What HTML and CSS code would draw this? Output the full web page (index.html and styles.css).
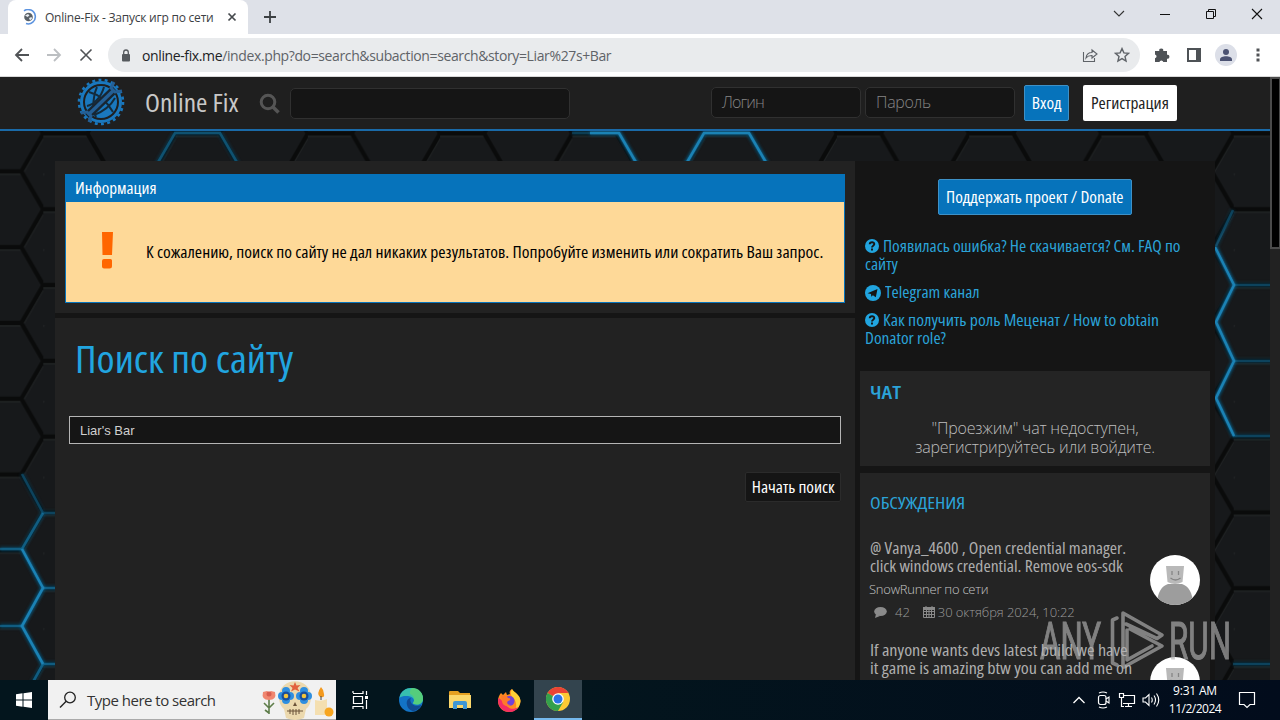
FILE: index.html
```html
<!DOCTYPE html>
<html lang="ru">
<head>
    <meta charset="UTF-8">
    <meta name="viewport" content="width=device-width, initial-scale=1.0">
    <title>Online-Fix - Запуск игр по сети</title>
    <link rel="stylesheet" href="styles.css">
</head>
<body>

    <!-- Browser tabs -->
    <div class="tabbar">
        <div class="tab">
            <svg class="favicon" width="16" height="16" viewBox="0 0 16 16">
                <path d="M3 1.8A7.2 7.2 0 1 1 5 14.6" fill="none" stroke="#5b93e0" stroke-width="1.6"/>
                <circle cx="7.5" cy="8" r="4.3" fill="#596066"/>
                <path d="M4 6.5l3-1.5 1.5 1.5-2 1.5zM8 9l2.5-1 .5 1.5-2 2z" fill="#e8edf2"/>
            </svg>
            <span class="tab-title">Online-Fix - Запуск игр по сети</span>
            <svg width="10" height="10" viewBox="0 0 10 10"><path d="M1.5 1.5l7 7M8.5 1.5l-7 7" stroke="#45494d" stroke-width="1.7"/></svg>
        </div>
        <svg class="new-tab" width="12" height="12" viewBox="0 0 12 12"><path d="M6 0v12M0 6h12" stroke="#3c4043" stroke-width="1.8"/></svg>
        <div class="window-buttons">
            <svg width="12" height="12" viewBox="0 0 12 12"><path d="M1 3l5 5 5-5" fill="none" stroke="#333" stroke-width="1.1"/></svg>
            <svg width="12" height="12" viewBox="0 0 12 12"><path d="M1 6.5h10" stroke="#111"/></svg>
            <svg width="12" height="12" viewBox="0 0 12 12"><path d="M1.5 3.5h7v7h-7zM3.5 3.5v-2h7v7h-2" fill="none" stroke="#111"/></svg>
            <svg width="12" height="12" viewBox="0 0 12 12"><path d="M1 1l10 10M11 1L1 11" stroke="#111" stroke-width="1.1"/></svg>
        </div>
    </div>

    <!-- Address bar -->
    <div class="toolbar">
        <div class="nav-buttons">
            <svg width="16" height="16" viewBox="0 0 16 16"><path d="M15 8H2M8 2L2 8l6 6" fill="none" stroke="#505356" stroke-width="1.8"/></svg>
            <svg width="16" height="16" viewBox="0 0 16 16"><path d="M1 8h13M8 2l6 6-6 6" fill="none" stroke="#bcbfc2" stroke-width="1.8"/></svg>
            <svg width="16" height="16" viewBox="0 0 16 16"><path d="M2.5 2.5l11 11M13.5 2.5l-11 11" stroke="#505356" stroke-width="1.6"/></svg>
        </div>
        <div class="address">
            <svg width="10" height="13" viewBox="0 0 10 13"><rect x="1" y="5" width="8" height="7.5" rx="1" fill="#55595d"/><path d="M2.7 5V3.3a2.3 2.3 0 0 1 4.6 0V5" fill="none" stroke="#55595d" stroke-width="1.3"/></svg>
            <div class="url"><b>online-fix.me</b>/index.php?do=search&amp;subaction=search&amp;story=Liar%27s+Bar</div>
            <svg width="16" height="16" viewBox="0 0 16 16"><path d="M1.5 5v9.5h11V11M4 11c.5-4 2.500-5.500 6-5.500V3l5 4-5 4V8.500C7.500 8.400 5.500 9 4 11z" fill="none" stroke="#5f6368" stroke-width="1.100"/></svg>
            <svg width="16" height="16" viewBox="0 0 16 16"><path d="M8 1.600l1.900 4.300 4.600.4-3.500 3.100 1.050 4.600L8 11.600 3.950 14 5 9.400 1.500 6.300l4.600-.4z" fill="none" stroke="#5f6368" stroke-width="1.400"/></svg>
        </div>
        <div class="toolbar-icons">
            <svg width="16" height="16" viewBox="0 0 16 16"><path d="M1 4h4.300a2 2 0 1 1 3.900 0H13v3.800a2 2 0 1 1 0 3.900V15H9.300a2 2 0 0 0-3.900 0H1v-3.700a2 2 0 0 0 0-3.900z" fill="#4e5256"/></svg>
            <svg width="16" height="16" viewBox="0 0 16 16"><path d="M1 1h14v14H1zM3 3v10h7V3z" fill="#4e5256" fill-rule="evenodd"/></svg>
            <svg width="22" height="22" viewBox="0 0 22 22"><circle cx="11" cy="11" r="11" fill="#dcdfe8"/><circle cx="11" cy="8" r="3" fill="#4b5272"/><path d="M5 17v-1.500c0-2 3-3.200 6-3.200s6 1.200 6 3.200V17z" fill="#4b5272"/></svg>
            <svg class="kebab" width="4" height="16" viewBox="0 0 4 16"><path d="M.5 1.500h3v3h-3zM.5 6.500h3v3h-3zM.5 11.500h3v3h-3z" fill="#505356"/></svg>
        </div>
    </div>

    <!-- Page -->
    <div class="page">
        <svg class="honeycomb" width="1270" height="603" viewBox="0 77 1270 603">
            <defs>
                <pattern id="hex" x="43.300" y="133.500" width="132.270" height="75.800" patternUnits="userSpaceOnUse">
                    <rect width="133" height="76" fill="#17191b"/>
                    <g id="cell" fill="none">
                        <path d="M-2 2.500H44.100M44.100 78.300H-2M67 38.900L44.100 78.300M66 40.400H110.300M111.500 39.900L134.300 0.500M-22 78.300L0.500 39.900" stroke="#232627" stroke-width="2"/>
                        <path d="M-2 0H44.100L66 37.900 44.100 75.800H-2M66 37.900H110.300L132.300 75.800M110.300 37.900L132.300 0" stroke="#0a0b0b" stroke-width="4.400"/>
                    </g>
                </pattern>
                <filter id="glow" filterUnits="userSpaceOnUse" x="-20" y="77" width="1310" height="620"><feGaussianBlur stdDeviation="1.500"/></filter>
                <g id="lit">
                    <path d="M153 171l22-38h45l22 38" opacity=".45"/>
                    <path d="M572 133h20" opacity=".3"/>
                    <path d="M590 133h29l22 38M682 171l22-38h45l22 38"/>
                    <path d="M22 474l21 39h14" opacity=".35"/>
                    <path d="M43 513l-21 36H0M43 588h14M22 626H0M43 664h14M43 664l-10 18" opacity=".55"/>
                    <path d="M22 549l21 39-21 38 21 38"/>
                    <path d="M1233 210l-17 36M1233 285h40M1233 361h40M1233 436h40M1233 664h40" opacity=".35"/>
                    <path d="M1215 247l19 38-18 37 18 39-18 37 18 38"/>
                </g>
            </defs>
            <rect y="77" width="1270" height="603" fill="url(#hex)"/>
            <use href="#lit" fill="none" stroke="#0a5c84" stroke-width="4.500" filter="url(#glow)"/>
            <use href="#lit" fill="none" stroke="#1b82b4" stroke-width="2.600"/>
        </svg>

        <header class="header">
            <svg class="logo" width="48" height="48" viewBox="0 0 48 48">
                <circle cx="24" cy="24" r="22" fill="none" stroke="#1a78be" stroke-width="2.600" stroke-dasharray="2.900 3.380"/>
                <circle cx="24" cy="24" r="19.500" fill="none" stroke="#1a78be" stroke-width="3"/>
                <circle cx="24" cy="24" r="16" fill="#1a78be"/>
                <path d="M12 14c8 2 17 8 24 20M10 28c6-1 14-8 17-19M17 37c8-3 16-8 21-17M20 9c-4 8-5 20-1 30" fill="none" stroke="#142b3c" stroke-width="2"/>
                <path d="M10 38L38 11" stroke="#182632" stroke-width="8"/>
                <path d="M11 37L37 12" stroke="#245f95" stroke-width="3.500"/>
                <path d="M37 4l-3 6 4 4 7-1M4 35l6-1 4 4-2 6" fill="none" stroke="#245f95" stroke-width="3"/>
            </svg>
            <div class="brand"><span class="cond">Online Fix</span></div>
            <svg class="search-icon" width="22" height="22" viewBox="0 0 22 22"><circle cx="9" cy="9" r="6.800" fill="none" stroke="#555" stroke-width="3"/><path d="M13.500 13.500l6 6" stroke="#555" stroke-width="3.600"/></svg>
            <div class="field field-search"></div>
            <div class="field field-login">Логин</div>
            <div class="field field-pass">Пароль</div>
            <div class="btn btn-blue btn-enter"><span class="cond">Вход</span></div>
            <div class="btn btn-white btn-reg"><span class="cond">Регистрация</span></div>
        </header>

        <div class="wrapper">
            <main class="content">
                <section class="block block-info">
                    <div class="alert">
                        <div class="alert-title"><span class="cond">Информация</span></div>
                        <div class="alert-body">
                            <svg width="12" height="37" viewBox="0 0 12 37"><path d="M1 0h11l-1 23H1.500zM3 27h6.500q1.500 0 1.500 1.500V34q0 2.500-2.500 2.500H3q-2 0-2-2V29q0-2 2-2z" fill="#f60"/></svg>
                            <span class="alert-text cond">К сожалению, поиск по сайту не дал никаких результатов. Попробуйте изменить или сократить Ваш запрос.</span>
                        </div>
                    </div>
                </section>
                <section class="block block-search">
                    <h1><span class="cond">Поиск по сайту</span></h1>
                    <div class="query">Liar's Bar</div>
                    <div class="btn btn-dark"><span class="cond">Начать поиск</span></div>
                </section>
            </main>

            <aside class="sidebar">
                <div class="btn btn-blue btn-donate"><span class="cond">Поддержать проект / Donate</span></div>
                <div class="links">
                    <p><svg class="ic" width="14" height="14" viewBox="0 0 14 14"><circle cx="7" cy="7" r="7" fill="#21a5e0"/><path d="M4.700 5.300C4.800 2.600 9.500 2.700 9.300 5.200 9.200 6.700 7 6.700 7 8.400M7 9.600v1.900" fill="none" stroke="#151515" stroke-width="1.900"/></svg> <span class="cond">Появилась ошибка? Не скачивается? См. FAQ по</span><br><span class="cond">сайту</span></p>
                    <p class="link-tg"><svg class="ic" width="16" height="16" viewBox="0 0 16 16"><circle cx="8" cy="8" r="8" fill="#21a5e0"/><path d="M2.500 8.200L12.500 4l-1.700 8.300-2.900-2.100-1.600 1.500-.3-2.600z" fill="#151515"/></svg> <span class="cond">Telegram канал</span></p>
                    <p><svg class="ic" width="14" height="14" viewBox="0 0 14 14"><circle cx="7" cy="7" r="7" fill="#21a5e0"/><path d="M4.700 5.300C4.800 2.600 9.500 2.700 9.300 5.200 9.200 6.700 7 6.700 7 8.400M7 9.600v1.900" fill="none" stroke="#151515" stroke-width="1.900"/></svg> <span class="cond link-role">Как получить роль Меценат / How to obtain</span><br><span class="cond">Donator role?</span></p>
                </div>
                <section class="side-box chat">
                    <h3><span class="cond">ЧАТ</span></h3>
                    <p>"Проезжим" чат недоступен,<br>зарегистрируйтесь или войдите.</p>
                </section>
                <section class="side-box talks">
                    <h4><span class="cond">ОБСУЖДЕНИЯ</span></h4>
                    <article class="talk">
                        <div class="talk-main">
                            <p class="talk-text cond">@ Vanya_4600 , Open credential manager.<br>click windows credential. Remove eos-sdk</p>
                            <div class="talk-game">SnowRunner по сети</div>
                            <div class="talk-meta">
                                <svg width="13" height="12" viewBox="0 0 13 12"><ellipse cx="6.500" cy="5.500" rx="6.300" ry="4.500" fill="#8a8a8a"/><path d="M2 8l-1 4 5-2z" fill="#8a8a8a"/></svg>
                                <span class="count">42</span>
                                <svg width="12" height="13" viewBox="0 0 12 13"><path d="M.5 3.500h11v9H.5zM.5 6.500h11M.5 9.500h11M3.500 4v8M6 4v8M8.500 4v8M3 1v3M9 1v3" fill="none" stroke="#8a8a8a"/><path d="M0 2h12v3H0z" fill="#8a8a8a"/></svg>
                                <span class="date">30 октября 2024, 10:22</span>
                            </div>
                        </div>
                        <svg class="avatar" width="50" height="50" viewBox="0 0 50 50">
                            <defs>
                                <clipPath id="round"><circle cx="25" cy="25" r="25"/></clipPath>
                                <g id="person">
                                    <rect width="50" height="50" fill="#fff"/>
                                    <path d="M7 50c0-13 5-19 11-21h14c6 2 11 8 11 21z" fill="#9d9d9d"/>
                                    <path d="M16 11h18l-1.500 16q-7.500 4-15 0z" fill="#b9b9b9"/>
                                    <path d="M22 16v4M28.500 16v4M20.500 23q5 4 10 0" fill="none" stroke="#858585" stroke-width="1.300"/>
                                </g>
                            </defs>
                            <use href="#person" clip-path="url(#round)"/>
                        </svg>
                    </article>
                    <article class="talk">
                        <div class="talk-main">
                            <p class="talk-text talk-wide cond">If anyone wants devs latest build we have<br>it game is amazing btw you can add me on</p>
                        </div>
                        <svg class="avatar" width="50" height="50" viewBox="0 0 50 50"><use href="#person" clip-path="url(#round)"/></svg>
                    </article>
                </section>
            </aside>
        </div>

        <div class="scrollbar"><div class="thumb"></div></div>

        <svg class="watermark" width="192" height="64" viewBox="0 0 192 64">
            <g fill="#b4b4b4" stroke="#b4b4b4" stroke-width="1.200">
                <text x="0" y="50" font-size="51" textLength="61" lengthAdjust="spacingAndGlyphs">ANY</text>
                <text x="129" y="50" font-size="51" textLength="62" lengthAdjust="spacingAndGlyphs">RUN</text>
            </g>
            <path d="M77 9l-4.500 2v43l4.500 2M83 56V4l39 22-5 3.500L86 15M87 21v30l25-14M90 20l32 17-38 21" fill="none" stroke="#b4b4b4" stroke-width="3.600" stroke-linejoin="round" stroke-linecap="round"/>
        </svg>
    </div>

    <!-- Taskbar -->
    <div class="taskbar">
        <div class="start"><svg width="16" height="16" viewBox="0 0 16 16"><path d="M0 2.200l6.500-.9v6.200H0zM7.500 1.200L16 0v7.500H7.500zM0 8.500h6.500v6.200L0 13.800zM7.500 8.500H16V16l-8.500-1.200z" fill="#fff"/></svg></div>
        <div class="task-search">
            <svg width="18" height="18" viewBox="0 0 18 18"><circle cx="11" cy="6.500" r="5.300" fill="none" stroke="#222" stroke-width="1.300"/><path d="M7.200 10.300L1 16.500" stroke="#222" stroke-width="1.400"/></svg>
            <span>Type here to search</span>
            <svg width="74" height="40" viewBox="0 0 74 40">
                <path d="M8 16v18M8 28l-5-5M8 28l5-5M8 33l-4-3" stroke="#5e7d4a" stroke-width="1.600" fill="none"/>
                <path d="M2 12l4-1 2 1 2-1 4 1q2 8-6 8T2 12z" fill="#f0866f"/>
                <circle cx="8" cy="14" r="2.500" fill="#d75d4f"/>
                <path d="M18 17C18-4 50-4 50 17q0 8-5 12l-2 9q-9 4-18 0l-2-9q-5-4-5-12z" fill="#ecd9ae"/>
                <g fill="#2f8fe0"><circle cx="25" cy="11" r="4"/><circle cx="21" cy="16" r="4"/><circle cx="29" cy="16" r="4"/><circle cx="25" cy="20" r="4"/><circle cx="43" cy="11" r="4"/><circle cx="47" cy="16" r="4"/><circle cx="39" cy="16" r="4"/><circle cx="43" cy="20" r="4"/></g>
                <g fill="#194f9c"><circle cx="25" cy="16" r="4.500"/><circle cx="43" cy="16" r="4.500"/></g>
                <g fill="#f2c53a"><circle cx="25" cy="16" r="2.300"/><circle cx="43" cy="16" r="2.300"/></g>
                <path d="M34 2l1.500 3.500 4-.5-3 3 2 3.500-4.500-2-4 2 1.500-3.500-3-3 4 .5z" fill="#e2603d"/>
                <path d="M32 26l2-4 2 4z" fill="#6b5238"/>
                <path d="M26 31h16M29 29v5M32 29v6M35 29v6M38 29v5" stroke="#6b5238"/>
                <path d="M54 20q6 2 12-1v16H54z" fill="#f4dfb0"/>
                <path d="M60 7q-5 7-1 10 5 1 4-3 0-4-3-7z" fill="#f39a1f"/>
                <path d="M60 16v4" stroke="#444"/>
                <circle cx="68" cy="32" r="4.500" fill="#f7a51f"/>
            </svg>
        </div>
        <div class="apps">
            <div class="app app-view"><svg width="18" height="18" viewBox="0 0 18 18"><path d="M1 2V0M1 2.500h10V0M1.500 5.500h9v7h-9zM1 18v-2.500h10V18M14.500 0v4M14.500 9v9" fill="none" stroke="#fff" stroke-width="1.200"/><path d="M13 5h3v3h-3z" fill="#fff"/></svg></div>
            <div class="app"><svg width="26" height="26" viewBox="0 0 26 26">
                <circle cx="13" cy="13" r="12" fill="#1373c6"/>
                <path d="M1.500 11C2.500 4 8 1 13 1c8 0 12 6 12 10.500 0 4-3 6-6.500 6-2.500 0-3.500-1-3.500-1.500 2-2 1-5.500-3-6.500C8 8.500 3.500 9 1.500 11z" fill="#37bfae"/>
                <path d="M14 1c7 0 11 5 11 10.500 0 4-3 6-6 6-3 0-4-1-4-1.500 3-4 0-8-3-9 0-3 0-5 2-6z" fill="#55cd7c"/>
                <path d="M9 18c-1-4 1-7 4-7-1 1-1 4 1 6 3 2.500 7 2 9.500 1-2 4-6 6-9 6-3-1-5-3-5.500-6z" fill="#114a91"/>
            </svg></div>
            <div class="app"><svg width="22" height="20" viewBox="0 0 22 20"><path d="M0 2q0-1 1-1h8l2 2h10v15H0z" fill="#e5a021"/><path d="M0 5h22v13H0z" fill="#fbd76b"/><path d="M4 19v-6q0-2 2-2h10q2 0 2 2v6h-4v-4H8v4z" fill="#3f97d5"/></svg></div>
            <div class="app"><svg width="24" height="24" viewBox="0 0 24 24">
                <path d="M4 5l2 2 3-3 1 3 3-1c-1-2 0-4 2-5 1 3 8 5 8.500 12C23.500 19 18 24 12 24S1 19.500 1 13c0-3 1-6 3-8z" fill="#ff8a1f"/>
                <path d="M15 1c1 3 8 5 8.500 12-1 6-3 8-5 9 2-5 0-11-4-14-1-2-1-5 .5-7z" fill="#ffcf35"/>
                <path d="M1.500 10c-2 8 4 14 11 14 4 0 7-2 9-5-5 3-9 2-12-1-3-2-3-5-8-8z" fill="#f52d63"/>
                <circle cx="12.500" cy="13" r="5" fill="#7141d9"/><path d="M4 8c3-1 6 0 7 2 3 0 3 2 0 3-2 2 0 4 3 4-4 3-9 0-9-4z" fill="#ff7a2a"/>
            </svg></div>
            <div class="app app-active"><svg width="24" height="24" viewBox="0 0 24 24">
                <circle cx="12" cy="12" r="12" fill="#fcc934"/>
                <path d="M12 12L1.600 6A12 12 0 0 1 22.400 6z" fill="#ea4335"/>
                <path d="M12 12L1.600 6A12 12 0 0 0 12 24l5.200-9z" fill="#34a04c"/>
                <path d="M12 6h10.400L17.200 15z" fill="#fcc934"/>
                <circle cx="12" cy="12" r="5.800" fill="#fff"/><circle cx="12" cy="12" r="4.500" fill="#2b73e8"/>
            </svg></div>
        </div>
        <div class="tray">
            <svg width="18" height="18" viewBox="-2 0 18 18"><path d="M1.500 12L7 6.500 12.500 12" fill="none" stroke="#fff" stroke-width="1.300"/></svg>
            <svg width="18" height="18" viewBox="-3 0 18 18"><rect x="1.500" y="4.500" width="7.500" height="9" rx="2" fill="none" stroke="#fff" stroke-width="1.200"/><path d="M9 8l3-2v6L9 10M2 2q4-2 8 0M2 16q4 2 8 0" fill="none" stroke="#fff" stroke-width="1.100"/></svg>
            <svg width="18" height="18" viewBox="0 0 18 18"><path d="M5 4.500h11.500v8H5M10.500 12.500V15M7 15.500h7M1.500 2.500h4v4h-4zM3.500 6.500v9H6" fill="none" stroke="#fff" stroke-width="1.200"/></svg>
            <svg width="18" height="18" viewBox="0 0 18 18"><path d="M1 7h2.500L7 3.500v11L3.500 11H1zM9.500 6.500q1.500 2.500 0 5M12 4.500q3 4.500 0 9M14.500 2.500q4.500 6.500 0 13" fill="none" stroke="#fff" stroke-width="1.100"/></svg>
            <div class="clock"><span>9:31 AM</span><span class="day">11/2/2024</span></div>
            <svg width="18" height="18" viewBox="0 0 18 18"><path d="M1.500 1.500h15v12H12l-3 3-3-3H1.500z" fill="none" stroke="#fff" stroke-width="1.200"/></svg>
        </div>
    </div>

</body>
</html>
```
FILE: styles.css
```css
* {
    margin: 0;
    padding: 0;
    box-sizing: border-box;
}

body {
    width: 1280px;
    height: 720px;
    overflow: hidden;
    display: flex;
    flex-direction: column;
    font-family: "Open Sans", "Noto Sans", sans-serif;
    background: #151515;
}

svg {
    display: block;
    flex-shrink: 0;
}

/* Semi-condensed text: condensed face, slightly widened */
.cond {
    display: inline-block;
    font-family: "Open Sans", "Noto Sans", sans-serif;
    font-stretch: 75%;
    transform: scaleX(1.098);
    transform-origin: left center;
    white-space: nowrap;
}

/* Browser tabs */
.tabbar {
    height: 34px;
    background: #dee1e8;
    display: flex;
    align-items: center;
    padding-left: 8px;
}

.tab {
    width: 240px;
    height: 34px;
    background: #fff;
    border-radius: 8px 8px 0 0;
    display: flex;
    align-items: center;
    padding-left: 13px;
}

.tab-title {
    width: 169px;
    margin: 0 13px 0 8px;
    font-size: 12px;
    letter-spacing: -0.22px;
    white-space: nowrap;
    color: #3c4043;
}

.new-tab {
    margin-left: 16px;
}

.window-buttons {
    margin-left: auto;
    margin-right: 17px;
    display: flex;
    gap: 34px;
    margin-top: -6px;
}

/* Address bar */
.toolbar {
    height: 43px;
    background: #fff;
    border-bottom: 1px solid #d8d8d8;
    display: flex;
    align-items: center;
    padding-left: 14px;
}

.nav-buttons {
    display: flex;
    gap: 16px;
}

.address {
    width: 1032px;
    height: 34px;
    margin-left: 14px;
    padding: 0 10px 0 13px;
    background: #e9ebed;
    border-radius: 17px;
    display: flex;
    align-items: center;
    gap: 16px;
}

.url {
    flex: 1;
    margin-left: -5px;
    font-size: 14px;
    letter-spacing: -0.38px;
    color: #5f6368;
    white-space: nowrap;
}

.url b {
    font-weight: normal;
    color: #202124;
}

.toolbar-icons {
    display: flex;
    align-items: center;
    gap: 16px;
    margin-left: 14px;
}

.toolbar-icons svg:nth-child(3) {
    margin: 0 3px 0 -3px;
}

/* Page */
.page {
    position: relative;
    height: 603px;
    overflow: hidden;
}

.honeycomb {
    position: absolute;
    left: 0;
    top: 0;
}

.header {
    position: relative;
    width: 1270px;
    height: 54px;
    background: #1f1f1f;
    border-bottom: 2px solid #1a6aa8;
    display: flex;
    align-items: center;
    padding-left: 77px;
}

.logo {
    margin-top: -2px;
}

.brand {
    width: 94px;
    margin: -2px 0 0 20px;
    font-size: 25px;
    color: #c8c8c8;
}

.search-icon {
    margin-left: 20px;
    margin-top: 2px;
}

.field {
    height: 31px;
    background: #151515;
    border: 1px solid #303030;
    border-radius: 5px;
    padding-left: 10px;
    font-size: 16px;
    line-height: 29px;
    font-weight: 300;
    color: #858585;
}

.field-search {
    width: 280px;
    margin-left: 9px;
}

.field-login {
    width: 150px;
    margin: -2px 0 0 141px;
    letter-spacing: -0.9px;
}

.field-pass {
    width: 150px;
    margin: -2px 0 0 4px;
    letter-spacing: -0.3px;
}

.btn {
    display: flex;
    align-items: center;
    justify-content: center;
    height: 36px;
    border-radius: 2px;
    font-size: 16px;
}

.btn .cond {
    transform: scaleX(1.085);
    transform-origin: center;
}

.btn-blue {
    background: #0673bb;
    border: 1px solid #3e91c7;
    color: #fff;
}

.btn-white {
    background: #fff;
    color: #222;
}

.btn-enter {
    width: 45px;
    margin-left: 9px;
}

.btn-reg {
    width: 94px;
    margin-left: 14px;
}

.wrapper {
    position: relative;
    width: 1160px;
    height: 520px;
    margin: 30px 0 0 55px;
    display: flex;
    background: #151515;
}

.content {
    width: 800px;
    display: flex;
    flex-direction: column;
    gap: 5px;
}

.block {
    background: #222;
}

.block-info {
    height: 152px;
    padding: 13px 10px;
}

.alert {
    height: 129px;
    border: 1px solid #0673bb;
    background: #fed998;
}

.alert-title {
    height: 27px;
    padding-left: 9px;
    background: #0673bb;
    color: #fff;
    font-size: 16px;
    line-height: 26px;
}

.alert-title .cond {
    transform: scaleX(1.066);
}

.alert-body {
    height: 99px;
    display: flex;
    align-items: center;
    padding-left: 35px;
}

.alert-body svg {
    margin-top: -3px;
}

.alert-text {
    margin-left: 33px;
    font-size: 16px;
    color: #000;
}

.block-search {
    flex: 1;
    padding: 14px;
}

.block-search h1 {
    height: 54px;
    padding-left: 6px;
    font-size: 38px;
    line-height: 52px;
    font-weight: normal;
    color: #21a5e0;
}

h1 .cond {
    transform: scaleX(1.082);
}

.query {
    height: 28px;
    margin-top: 30px;
    padding-left: 10px;
    background: #151515;
    border: 1px solid #b5b5b5;
    font-family: "Liberation Sans", sans-serif;
    font-size: 13px;
    line-height: 27px;
    color: #d0d0d0;
}

.btn-dark {
    width: 96px;
    height: 30px;
    margin: 28px 0 0 auto;
    background: #151515;
    border: 1px solid #2b2b2b;
    color: #fff;
}

/* Sidebar */
.sidebar {
    width: 360px;
    padding: 18px 5px 0;
}

.btn-donate {
    width: 194px;
    margin: 0 auto;
}

.links {
    height: 156px;
    padding: 22px 5px 0;
    font-size: 16px;
    line-height: 18px;
    color: #2ba3d8;
    white-space: nowrap;
}

.links p {
    margin-bottom: 10px;
}

.links .cond {
    transform: scaleX(1.086);
}

.links .link-role {
    transform: scaleX(1.108);
}

.ic {
    display: inline-block;
    vertical-align: -1px;
}

.link-tg .ic {
    vertical-align: -3px;
}

.side-box {
    background: #242424;
}

.chat {
    height: 95px;
    padding: 9px 10px;
}

.chat h3 {
    font-size: 18px;
    line-height: 24px;
    font-weight: 600;
    color: #2ba3d8;
}

.chat h3 .cond {
    transform: scaleX(1.22);
}

.chat p {
    margin-top: 15px;
    font-size: 16px;
    line-height: 19px;
    font-weight: 300;
    letter-spacing: -0.2px;
    text-align: center;
    color: #bdbdbd;
    white-space: nowrap;
}

.talks {
    height: 260px;
    margin-top: 7px;
    padding: 18px 10px;
}

.talks h4 {
    margin-bottom: 24px;
    font-size: 16px;
    line-height: 24px;
    font-weight: normal;
    color: #2ba3d8;
}

.talks h4 .cond {
    transform: scaleX(1.22);
}

.talk {
    height: 102px;
    display: flex;
    justify-content: space-between;
}

.talk-main {
    width: 270px;
}

.talk-text {
    display: block;
    width: 236px;
    font-size: 16px;
    line-height: 18px;
    color: #aeaeae;
}

.talk-wide {
    transform: scaleX(1.133);
}

.talk-game {
    margin: 4px 0 0 -1px;
    font-size: 13px;
    line-height: 20px;
    font-weight: 300;
    letter-spacing: -0.25px;
    color: #c4c4c4;
}

.talk-meta {
    display: flex;
    align-items: center;
    height: 25px;
    padding-left: 4px;
    font-size: 13px;
    font-weight: 300;
    color: #9c9c9c;
}

.count {
    margin: 0 13px 0 8px;
}

.date {
    margin-left: 3px;
    letter-spacing: -0.08px;
}

.avatar {
    margin-top: 16px;
}

.scrollbar {
    position: absolute;
    right: 0;
    top: 0;
    width: 10px;
    height: 603px;
    background: #222;
}

.thumb {
    height: 172px;
    background: #000;
    border: 2px solid #4a4a4a;
    border-right-width: 1px;
}

.watermark {
    position: absolute;
    left: 1040px;
    top: 532px;
    opacity: 0.65;
    font-family: "Roboto", sans-serif;
}

/* Taskbar */
.taskbar {
    height: 40px;
    display: flex;
    background: linear-gradient(90deg, #03151d 0%, #03151d 45%, #020c1c 100%);
}

.start {
    width: 48px;
    display: flex;
    align-items: center;
    justify-content: center;
}

.task-search {
    width: 288px;
    background: #f1f1f1;
    border-bottom: 1px solid #aaa;
    display: flex;
    align-items: center;
    padding-left: 11px;
}

.task-search span {
    width: 174px;
    margin-left: 10px;
    font-size: 15px;
    letter-spacing: -0.5px;
    color: #333;
    white-space: nowrap;
}

.apps {
    display: flex;
}

.app {
    width: 49px;
    display: flex;
    align-items: center;
    justify-content: center;
}

.app-view {
    width: 50px;
    padding-right: 1px;
}

.app:last-child {
    width: 48px;
    margin-left: 1px;
}

.app-active {
    background: #33444e;
    border-bottom: 2px solid #76b9ed;
}

.tray {
    margin-left: auto;
    margin-right: 24px;
    display: flex;
    align-items: center;
    gap: 6px;
}

.clock {
    width: 56px;
    display: flex;
    flex-direction: column;
    align-items: center;
    margin: 0 9px 0 1px;
    font-size: 12px;
    line-height: 18px;
    color: #fff;
    white-space: nowrap;
}

.clock span {
    letter-spacing: -0.2px;
}

.clock .day {
    letter-spacing: -0.5px;
}
```
